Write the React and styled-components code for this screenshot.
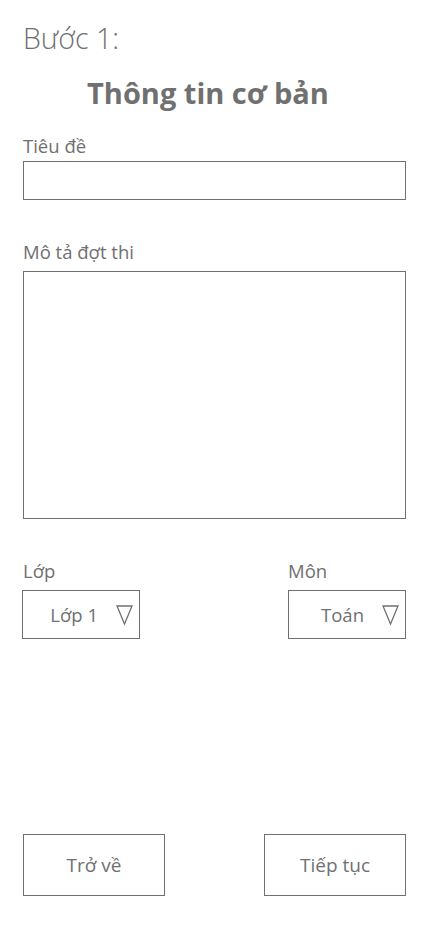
import styled, { createGlobalStyle } from "styled-components";

const GlobalStyle = createGlobalStyle`
  html, body {
    margin: 0;
    padding: 0;
    background: #ffffff;
  }
  body {
    font-family: "Open Sans", "Noto Sans", sans-serif;
    color: #707070;
  }
`;

const Page = styled.div`
  box-sizing: border-box;
  height: 926px;
  padding: 18px 22px 30px 23px;
  display: flex;
  flex-direction: column;
`;

const Step = styled.div`
  font-size: 28.5px;
  font-weight: 300;
  line-height: 40px;
`;

const Title = styled.h1`
  margin: 15px 0 0 0;
  padding-right: 13px;
  font-size: 29px;
  font-weight: 700;
  line-height: 40px;
  text-align: center;
`;

const Field = styled.div`
  display: flex;
  flex-direction: column;
  margin-top: ${(p) => p.$top || 0}px;
`;

const Label = styled.label`
  font-size: 18.5px;
  line-height: 24px;
  margin-bottom: ${(p) => p.$gap || 3}px;
`;

const Box = styled.div`
  box-sizing: border-box;
  height: ${(p) => p.$height}px;
  border: 1px solid #707070;
`;

const Row = styled.div`
  display: flex;
  justify-content: space-between;
  margin-top: ${(p) => p.$top || 0}px;
`;

const Select = styled.div`
  box-sizing: border-box;
  width: 118px;
  height: 49px;
  border: 1px solid #707070;
  display: flex;
  align-items: center;
  justify-content: flex-end;
  gap: 18px;
  padding-right: 6px;
  font-size: 18.5px;
  margin-left: ${(p) => p.$shift || 0}px;
`;

const Buttons = styled.div`
  margin-top: auto;
  display: flex;
  justify-content: space-between;
`;

const Button = styled.button`
  box-sizing: border-box;
  width: 142px;
  height: 62px;
  border: 1px solid #707070;
  background: #ffffff;
  color: #707070;
  font-family: inherit;
  font-size: 19px;
  padding: 0;
  cursor: pointer;
`;

function Triangle() {
  return (
    <svg width="17" height="22" viewBox="0 0 17 22" fill="none">
      <path d="M1 2 L16 2 L8.5 20 Z" stroke="#707070" strokeWidth="1.3" strokeLinejoin="miter" />
    </svg>
  );
}

function Dropdown({ value, shift }) {
  return (
    <Select $shift={shift}>
      <span>{value}</span>
      <Triangle />
    </Select>
  );
}

export default function App() {
  return (
    <>
      <GlobalStyle />
      <Page>
        <Step>Bước 1:</Step>
        <Title>Thông tin cơ bản</Title>

        <Field $top={21}>
          <Label>Tiêu đề</Label>
          <Box $height={39} />
        </Field>

        <Field $top={40}>
          <Label $gap={7}>Mô tả đợt thi</Label>
          <Box $height={248} />
        </Field>

        <Row $top={40}>
          <Field>
            <Label $gap={7}>Lớp</Label>
            <Dropdown value="Lớp 1" shift={-1} />
          </Field>
          <Field>
            <Label $gap={7}>Môn</Label>
            <Dropdown value="Toán" />
          </Field>
        </Row>

        <Buttons>
          <Button>Trở về</Button>
          <Button>Tiếp tục</Button>
        </Buttons>
      </Page>
    </>
  );
}
